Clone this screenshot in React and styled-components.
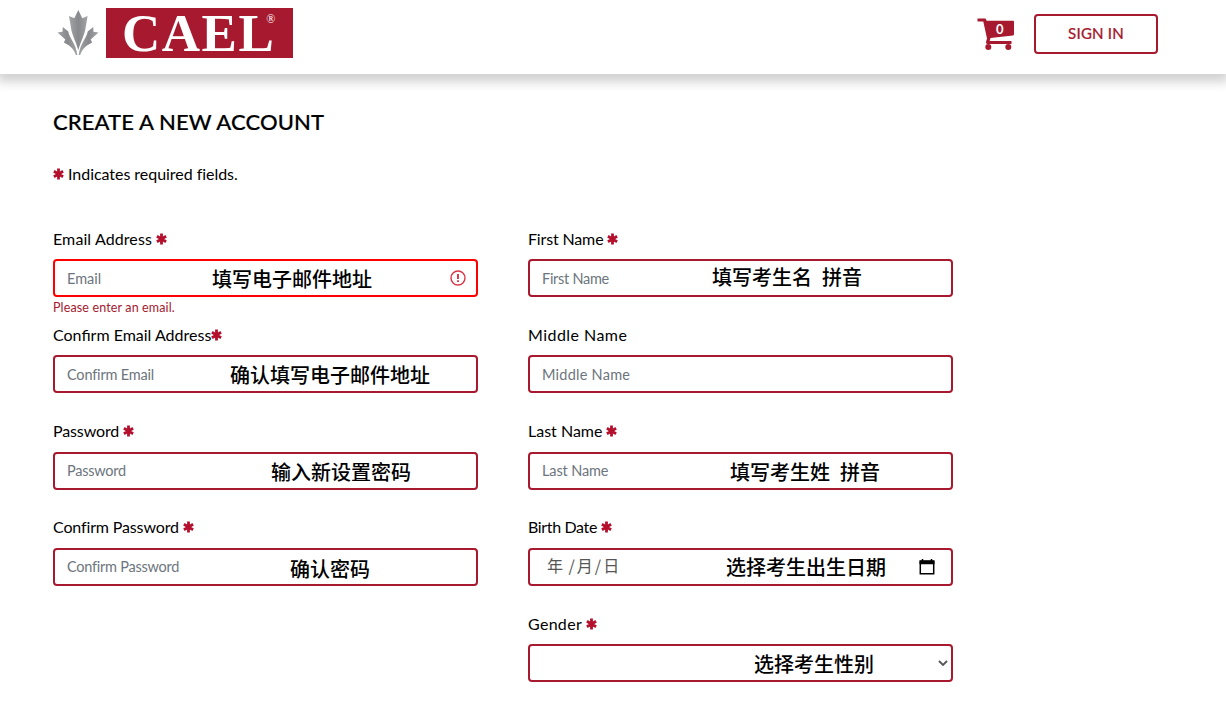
import React from "react";
import styled, { createGlobalStyle } from "styled-components";

const GlobalStyle = createGlobalStyle`
  * {
    box-sizing: border-box;
  }
  body {
    margin: 0;
    background: #fff;
    color: #000;
    font-family: Lato, "Noto Sans CJK SC", sans-serif;
    font-size: 16px;
  }
`;

const Header = styled.header`
  display: flex;
  justify-content: space-between;
  align-items: flex-start;
  height: 74px;
  padding: 8px 68px 0 56px;
  background: #fff;
  box-shadow: 0 5px 10px 3px rgba(0, 0, 0, 0.18);
`;

const Brand = styled.div`
  display: flex;
  align-items: flex-start;
  gap: 7px;
`;

const Wordmark = styled.div`
  display: flex;
  justify-content: flex-start;
  width: 187px;
  height: 50px;
  padding-left: 16px;
  background: #a6192e;
  color: #fff;
  font-family: "Liberation Serif", serif;
  font-weight: bold;
  font-size: 53px;
  line-height: 50px;
  letter-spacing: 1.5px;
`;

const Registered = styled.span`
  margin-left: -9px;
  font-size: 12px;
  font-weight: normal;
  line-height: 22px;
  letter-spacing: 0;
`;

const Actions = styled.div`
  display: flex;
  align-items: flex-start;
  gap: 19px;
  padding-top: 6px;
`;

const SignIn = styled.button`
  width: 124px;
  height: 40px;
  padding: 0 0 2px;
  border: 2px solid #a6192e;
  border-radius: 4px;
  background: #fff;
  color: #a6192e;
  font-family: inherit;
  font-weight: 500;
  font-size: 15px;
  letter-spacing: 0.2px;
  -webkit-text-stroke: 0.2px #a6192e;
`;

const Cart = styled.div`
  position: relative;
  width: 38px;
  height: 34px;
  margin-top: 4px;
`;

const CartCount = styled.span`
  position: absolute;
  left: 19px;
  top: 4px;
  color: #fff;
  font-weight: bold;
  font-size: 13px;
  line-height: 14px;
`;

const Main = styled.main`
  padding: 35px 53px 0;
`;

const Title = styled.h1`
  margin: 0;
  font-weight: 500;
  font-size: 22px;
  line-height: 26px;
  letter-spacing: 0.1px;
  white-space: nowrap;
  -webkit-text-stroke: 0.2px #000;
`;

const Note = styled.p`
  display: flex;
  align-items: center;
  gap: 4px;
  margin: 27px 0 0;
  line-height: 24px;
`;

const Columns = styled.div`
  display: grid;
  grid-template-columns: 425px 425px;
  column-gap: 50px;
  margin-top: 40px;
`;

const Field = styled.div`
  height: 96.3px;
`;

const Label = styled.label`
  display: flex;
  align-items: center;
  gap: ${(p) => (p.$tight ? "0" : "4px")};
  height: 24px;
  margin-bottom: 9px;

  svg {
    margin-top: 1px;
  }
`;

const Text = styled.span`
  letter-spacing: ${(p) => p.$track || 0}px;
  white-space: nowrap;
`;

const Box = styled.div`
  position: relative;
  display: flex;
  align-items: center;
  justify-content: space-between;
  height: 38px;
  padding: 0 ${(p) => p.$right || 10}px 0 12px;
  border: 2px solid ${(p) => (p.$invalid ? "#f00" : "#a6192e")};
  border-radius: 4px;
  color: #6c757d;
  font-size: 14.5px;
`;

const Hint = styled.span`
  position: absolute;
  left: ${(p) => p.$left}px;
  top: ${(p) => p.$top}px;
  color: #000;
  font-family: "Noto Sans CJK SC", sans-serif;
  font-weight: 500;
  font-size: 20px;
  line-height: 30px;
  word-spacing: 0.5px;
  white-space: pre;
`;

const DateParts = styled.span`
  margin: -4px 0 0 5px;
  color: #555;
  font-family: "Noto Sans CJK SC", sans-serif;
  font-weight: 400;
  font-size: 16px;
  letter-spacing: 2px;
  word-spacing: -2px;
  white-space: pre;
`;

const ErrorText = styled.div`
  color: #a6192e;
  font-size: 12.5px;
  line-height: 21px;
  letter-spacing: 0.14px;
`;

const Leaf = () => (
  <svg width="43" height="48" viewBox="0 0 43 48">
    <defs>
      <linearGradient id="leaf" x1="0" y1="0" x2="1" y2="0">
        <stop offset="0" stopColor="#a2a4a6" />
        <stop offset="0.5" stopColor="#87898c" />
        <stop offset="1" stopColor="#a2a4a6" />
      </linearGradient>
    </defs>
    <g fill="url(#leaf)">
      <path d="M22.3 2l4 8.2 5.300-2.200-2 12c-.8 6-4.600 13-7.300 22-2.700-9-6.500-16-7.300-22L13 8l5.300 2.200z" />
      <path d="M1.500 24.500l5-.8.300-4.700 5.500 4.500c1 7 7.500 11 9 23.500h-1.500c-2-6.500-6-9.500-12-12.500l1.500-3z" />
      <path d="M42.500 24.500l-5-.8-.3-4.700-5.500 4.500c-1 7-7.500 11-9 23.500h1.500c2-6.500 6-9.500 12-12.500l-1.500-3z" />
    </g>
  </svg>
);

const CartIcon = () => (
  <svg width="38" height="34" viewBox="0 0 38 34" fill="#a6192e">
    <path d="M.5.500h8l1.200 2.300H36q1 0 1 1v12.500q0 1-1 1.200L13.500 20l-.8 3H34.500v3H10.500q-1.700 0-1.500-2l1-3.500L6.300 3.500H.5z" />
    <circle cx="11.300" cy="29" r="3" />
    <circle cx="31.300" cy="29" r="3" />
  </svg>
);

const Required = () => (
  <svg width="11" height="12" viewBox="0 0 11 12" stroke="#b40f2c" strokeWidth="2.8">
    <path d="M5.500.500v11M.9 3.300l9.200 5.400M.9 8.700l9.200-5.400" />
  </svg>
);

const AlertIcon = () => (
  <svg width="16" height="16" viewBox="0 0 16 16" fill="none" stroke="#dc3545">
    <circle cx="8" cy="8" r="7" strokeWidth="1.4" />
    <path d="M8 4v5M8 10.300v1.800" strokeWidth="1.900" />
  </svg>
);

const CalendarIcon = () => (
  <svg width="16" height="16" viewBox="0 0 16 16" fill="none" stroke="#000">
    <path d="M1.300 2h13.400v12.800H1.300z" strokeWidth="1.500" />
    <path d="M.5 3.500h15" strokeWidth="3.500" />
    <path d="M3.500 0v3M12.500 0v3" strokeWidth="1.500" />
  </svg>
);

const Chevron = () => (
  <svg width="10" height="6" viewBox="0 0 10 6" fill="none" stroke="#555">
    <path d="M1 1l4 4 4-4" strokeWidth="1.800" />
  </svg>
);

const leftFields = [
  { label: "Email Address", labelTrack: 0.1, placeholder: "Email", hint: "填写电子邮件地址", left: 157, top: 3, invalid: true, required: true, error: "Please enter an email." },
  { label: "Confirm Email Address", placeholder: "Confirm Email", track: -0.18, hint: "确认填写电子邮件地址", left: 175, top: 3, required: true, tight: true },
  { label: "Password", labelTrack: -0.12, placeholder: "Password", track: -0.25, hint: "输入新设置密码", left: 216, top: 3, required: true },
  { label: "Confirm Password", labelTrack: -0.14, placeholder: "Confirm Password", track: -0.25, hint: "确认密码", left: 235, top: 4, required: true },
];

const rightFields = [
  { label: "First Name", labelTrack: -0.15, placeholder: "First Name", track: -0.28, hint: "填写考生名  拼音", left: 182, top: 1, required: true },
  { label: "Middle Name", labelTrack: 0.45, placeholder: "Middle Name", track: 0.25 },
  { label: "Last Name", placeholder: "Last Name", track: -0.12, hint: "填写考生姓  拼音", left: 200, top: 3, required: true },
  { label: "Birth Date", labelTrack: -0.35, date: true, hint: "选择考生出生日期", left: 196, top: 2, required: true },
  { label: "Gender", labelTrack: 0.3, select: true, hint: "选择考生性别", left: 224, top: 3, required: true },
];

function FormField({ field }) {
  return (
    <Field>
      <Label $tight={field.tight}>
        <Text $track={field.labelTrack}>{field.label}</Text>
        {field.required && <Required />}
      </Label>
      <Box $invalid={field.invalid} $right={field.date ? 16 : field.select ? 3 : 10}>
        {field.date ? <DateParts>年 /月/日</DateParts> : <Text $track={field.track}>{field.placeholder}</Text>}
        {field.invalid && <AlertIcon />}
        {field.date && <CalendarIcon />}
        {field.select && <Chevron />}
        {field.hint && <Hint $left={field.left} $top={field.top}>{field.hint}</Hint>}
      </Box>
      {field.error && <ErrorText>{field.error}</ErrorText>}
    </Field>
  );
}

function App() {
  return (
    <>
      <GlobalStyle />
      <Header>
        <Brand>
          <Leaf />
          <Wordmark>
            CAEL<Registered>®</Registered>
          </Wordmark>
        </Brand>
        <Actions>
          <Cart>
            <CartIcon />
            <CartCount>0</CartCount>
          </Cart>
          <SignIn>SIGN IN</SignIn>
        </Actions>
      </Header>
      <Main>
        <Title>CREATE A NEW ACCOUNT</Title>
        <Note>
          <Required />
          <Text $track={-0.04}>Indicates required fields.</Text>
        </Note>
        <Columns>
          <div>
            {leftFields.map((field) => (
              <FormField key={field.label} field={field} />
            ))}
          </div>
          <div>
            {rightFields.map((field) => (
              <FormField key={field.label} field={field} />
            ))}
          </div>
        </Columns>
      </Main>
    </>
  );
}

export default App;
